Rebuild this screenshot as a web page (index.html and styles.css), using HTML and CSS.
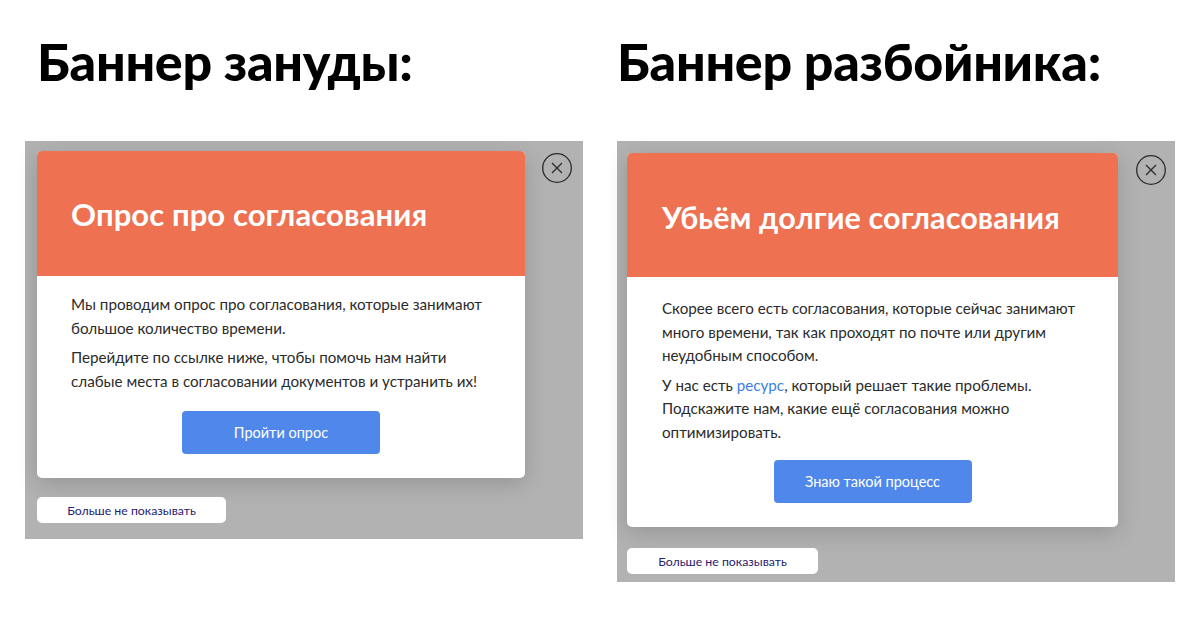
FILE: index.html
```html
<!DOCTYPE html>
<html lang="ru">
<head>
    <meta charset="UTF-8"/>
    <meta name="viewport" content="width=device-width, initial-scale=1.0"/>
    <title>Баннеры</title>
    <link rel="stylesheet" href="styles.css">
</head>
<body>
<div class="page">
    <!-- Левый пример -->
    <section class="example example-left">
        <h1 class="example-title">Баннер зануды:</h1>
        <div class="overlay overlay-left">
            <div class="modal-row">
                <div class="modal">
                    <div class="modal-head">
                        <h2>Опрос про согласования</h2>
                    </div>
                    <div class="modal-body body-left">
                        <p>Мы проводим опрос про согласования, которые занимают большое количество времени.</p>
                        <p>Перейдите по ссылке ниже, чтобы помочь нам найти слабые места в согласовании документов и устранить их!</p>
                        <button class="action">Пройти опрос</button>
                    </div>
                </div>
                <button class="close" aria-label="Закрыть">
                    <svg width="30" height="30" viewBox="0 0 30 30">
                        <circle cx="15" cy="15" r="14.3" fill="none" stroke="#2a2a2a" stroke-width="1.3"/>
                        <path d="M10 10 L20 20 M20 10 L10 20" stroke="#2a2a2a" stroke-width="1.3"/>
                    </svg>
                </button>
            </div>
            <button class="dismiss">Больше не показывать</button>
        </div>
    </section>

    <!-- Правый пример -->
    <section class="example example-right">
        <h1 class="example-title">Баннер разбойника:</h1>
        <div class="overlay overlay-right">
            <div class="modal-row">
                <div class="modal">
                    <div class="modal-head">
                        <h2>Убьём долгие согласования</h2>
                    </div>
                    <div class="modal-body body-right">
                        <p>Скорее всего есть согласования, которые сейчас занимают много времени, так как проходят по почте или другим неудобным способом.</p>
                        <p>У нас есть <a href="#">ресурс</a>, который решает такие проблемы. Подскажите нам, какие ещё согласования можно оптимизировать.</p>
                        <button class="action">Знаю такой процесс</button>
                    </div>
                </div>
                <button class="close" aria-label="Закрыть">
                    <svg width="30" height="30" viewBox="0 0 30 30">
                        <circle cx="15" cy="15" r="14.3" fill="none" stroke="#2a2a2a" stroke-width="1.3"/>
                        <path d="M10 10 L20 20 M20 10 L10 20" stroke="#2a2a2a" stroke-width="1.3"/>
                    </svg>
                </button>
            </div>
            <button class="dismiss">Больше не показывать</button>
        </div>
    </section>
</div>
</body>
</html>
```

FILE: styles.css
```css
* {
    margin: 0;
    padding: 0;
    box-sizing: border-box;
}
body {
    background: #fff;
    font-family: Lato, "Noto Sans", sans-serif;
    color: #2b2b2b;
}
.page {
    display: flex;
    gap: 34px;
    padding: 0 25px;
}
.example {
    width: 558px;
}
.example-title {
    font-weight: 900;
    font-size: 52px;
    line-height: 64px;
    letter-spacing: -0.3px;
    color: #000;
    padding-top: 29px;
    height: 141px;
}
.example-left .example-title {
    padding-left: 12px;
}
.overlay {
    background: #b2b2b2;
    display: flex;
    flex-direction: column;
    align-items: flex-start;
}
.overlay-left {
    height: 398px;
    padding: 10px 0 0 12px;
    gap: 19px;
}
.overlay-right {
    height: 441px;
    padding: 12px 0 0 10px;
    gap: 21px;
}
.modal-row {
    display: flex;
    align-items: flex-start;
}
.modal {
    background: #fff;
    border-radius: 5px;
    overflow: hidden;
    box-shadow: 0 6px 22px rgba(0, 0, 0, 0.16);
}
.overlay-left .modal {
    width: 488px;
    height: 327px;
}
.overlay-right .modal {
    width: 491px;
    height: 374px;
}
.modal-head {
    background: #ee7152;
    height: 125px;
    display: flex;
    align-items: center;
    padding: 0 34px;
}
.overlay-right .modal-head {
    height: 124px;
    padding: 4px 35px 0;
}
.modal-head h2 {
    color: #fff;
    font-weight: 700;
    font-size: 31px;
    letter-spacing: 0.1px;
}
.overlay-right .modal-head h2 {
    font-size: 30.5px;
}
.modal-body {
    display: flex;
    flex-direction: column;
    padding: 0 34px;
    font-size: 15.2px;
    line-height: 23.5px;
}
.body-left {
    padding-top: 17px;
}
.body-right {
    padding: 20px 30px 0 35px;
}
.modal-body p + p {
    margin-top: 6px;
}
.modal-body a {
    color: #3d7fe0;
    text-decoration: none;
}
.action {
    align-self: center;
    width: 198px;
    height: 43px;
    margin-top: 18px;
    border: none;
    border-radius: 4px;
    background: #4f88ea;
    color: #fff;
    font-family: Lato, "Noto Sans", sans-serif;
    font-size: 14.5px;
    cursor: pointer;
}
.body-right .action {
    margin-top: 16px;
    margin-left: -5px;
}
.close {
    border: none;
    background: none;
    width: 30px;
    height: 30px;
    margin-top: 2px;
    margin-left: 17px;
    cursor: pointer;
}
.overlay-right .close {
    margin-left: 18px;
}
.close svg {
    display: block;
}
.dismiss {
    width: 189px;
    height: 26px;
    border: none;
    border-radius: 5px;
    background: #fff;
    color: #1f2170;
    font-family: Lato, "Noto Sans", sans-serif;
    font-size: 12.3px;
    cursor: pointer;
}
.overlay-right .dismiss {
    width: 191px;
}
```
